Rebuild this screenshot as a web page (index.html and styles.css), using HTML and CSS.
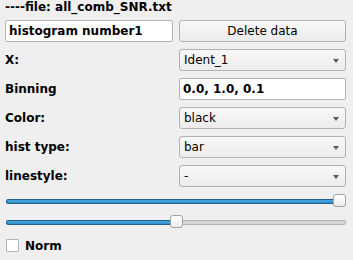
FILE: index.html
```html
<!DOCTYPE html>
<html>
<head>
<meta charset="utf-8">
<link rel="stylesheet" href="styles.css">
</head>
<body>
<div class="panel">
  <div class="title">----file: all_comb_SNR.txt</div>
  <div class="grid">
    <div class="edit bold">histogram number1</div>
    <div class="button">Delete data</div>

    <div class="label">X:</div>
    <div class="combo"><span>Ident_1</span><i class="arrow"></i></div>

    <div class="label">Binning</div>
    <div class="edit bold">0.0, 1.0, 0.1</div>

    <div class="label">Color:</div>
    <div class="combo"><span>black</span><i class="arrow"></i></div>

    <div class="label">hist type:</div>
    <div class="combo"><span>bar</span><i class="arrow"></i></div>

    <div class="label">linestyle:</div>
    <div class="combo"><span>-</span><i class="arrow"></i></div>
  </div>

  <div class="slider">
    <div class="groove"><div class="fill" style="width: 100%"></div></div>
    <div class="handle" style="left: calc(100% - 13px)"></div>
  </div>
  <div class="slider">
    <div class="groove"><div class="fill" style="width: calc(48% + 8px)"></div></div>
    <div class="handle" style="left: calc(48% + 1px)"></div>
  </div>

  <div class="check">
    <span class="box"></span>
    <span class="bold">Norm</span>
  </div>
</div>
</body>
</html>
```

FILE: styles.css
```css
html, body {
  margin: 0;
  padding: 0;
  background: #efefef;
}
body {
  font-family: "DejaVu Sans", sans-serif;
  font-size: 12px;
  color: #000;
  width: 353px;
  height: 260px;
  overflow: hidden;
}
.panel {
  padding: 0 7px 0 5px;
  display: flex;
  flex-direction: column;
}
.title {
  font-weight: bold;
  height: 14px;
  line-height: 14px;
  margin-bottom: 6px;
}
.bold { font-weight: bold; }
.grid {
  display: grid;
  grid-template-columns: 168px 1fr;
  column-gap: 6px;
  row-gap: 7px;
  grid-auto-rows: 22px;
}
.label {
  font-weight: bold;
  line-height: 22px;
}
.edit {
  background: #fff;
  border: 1px solid #b4b4b4;
  border-radius: 2px;
  line-height: 20px;
  padding: 0 3px;
  white-space: nowrap;
  overflow: hidden;
}
.button {
  border: 1px solid #b2b2b2;
  border-radius: 3px;
  background: linear-gradient(#f8f8f8, #ebebeb);
  line-height: 20px;
  text-align: center;
}
.combo {
  border: 1px solid #b2b2b2;
  border-radius: 3px;
  background: linear-gradient(#f8f8f8, #ececec);
  display: flex;
  align-items: center;
  justify-content: space-between;
  padding: 0 6px 0 4px;
}
.arrow {
  width: 0;
  height: 0;
  border-left: 3.5px solid transparent;
  border-right: 3.5px solid transparent;
  border-top: 4px solid #5a5a5a;
  margin-top: 1px;
}
.slider {
  position: relative;
  display: flex;
  align-items: center;
  height: 14px;
  margin-top: 7px;
  margin-left: 1px;
}
.groove {
  position: relative;
  flex: 1;
  height: 5px;
  box-sizing: border-box;
  border: 1px solid #b4b4b4;
  border-radius: 2px;
  background: #d6d6d6;
}
.fill {
  position: absolute;
  left: -1px;
  top: -1px;
  bottom: -1px;
  box-sizing: border-box;
  border: 1px solid #1f5f8c;
  border-radius: 2px;
  background: linear-gradient(#4aa8e6, #308cc6);
}
.handle {
  position: absolute;
  top: 0;
  width: 13px;
  height: 13px;
  box-sizing: border-box;
  border: 1px solid #a4a4a4;
  border-radius: 3px;
  background: linear-gradient(#ffffff, #ececec);
}
.check {
  display: flex;
  align-items: center;
  height: 19px;
  margin-top: 7px;
  font-size: 12px;
}
.box {
  width: 13px;
  height: 13px;
  box-sizing: border-box;
  border: 1px solid #b4b4b4;
  border-radius: 1px;
  background: #fff;
  margin-left: 1px;
  margin-right: 6px;
}
```
